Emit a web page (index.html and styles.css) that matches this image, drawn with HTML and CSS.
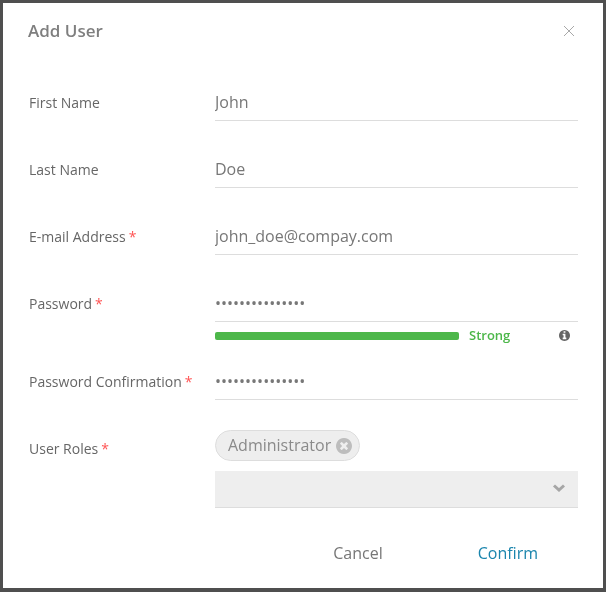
FILE: index.html
```html
<!DOCTYPE html>
<html lang="en">

<head>
    <meta charset="UTF-8">
    <title>Add User</title>
    <link rel="stylesheet" href="styles.css">
</head>

<body>
    <div class="modal">
        <div class="modal-head">
            <h2 class="modal-title">Add User</h2>
            <svg class="close-icon" viewBox="0 0 10 10" width="10" height="10">
                <path d="M0 0L10 10M10 0L0 10" stroke="#a8a8a8" stroke-width="1" fill="none"></path>
            </svg>
        </div>
        <form class="modal-body">
            <div class="row">
                <label class="row-label">First Name</label>
                <div class="row-field"><input class="text-input" type="text" value="John"></div>
            </div>
            <div class="row">
                <label class="row-label">Last Name</label>
                <div class="row-field"><input class="text-input" type="text" value="Doe"></div>
            </div>
            <div class="row">
                <label class="row-label">E-mail Address<span class="req">*</span></label>
                <div class="row-field"><input class="text-input" type="text" value="john_doe@compay.com"></div>
            </div>
            <div class="row row-password">
                <label class="row-label">Password<span class="req">*</span></label>
                <div class="row-field">
                    <input class="text-input" type="password" value="johndoepassword">
                    <div class="strength">
                        <div class="strength-bar"></div>
                        <span class="strength-text">Strong</span>
                        <svg class="info-icon" viewBox="0 0 1536 1536" width="11" height="11">
                            <path fill="#666" d="M1024 1248v-160q0-14-9-23t-23-9h-96V544q0-14-9-23t-23-9H544q-14 0-23 9t-9 23v160q0 14 9 23t23 9h96v320h-96q-14 0-23 9t-9 23v160q0 14 9 23t23 9h448q14 0 23-9t9-23zM896 352V192q0-14-9-23t-23-9H672q-14 0-23 9t-9 23v160q0 14 9 23t23 9h192q14 0 23-9t9-23zm640 416q0 209-103 385.500T1153.500 1433 768 1536t-385.500-103T103 1153.500 0 768t103-385.500T382.500 103 768 0t385.500 103T1433 382.500 1536 768z"></path>
                        </svg>
                    </div>
                </div>
            </div>
            <div class="row">
                <label class="row-label">Password Confirmation<span class="req">*</span></label>
                <div class="row-field"><input class="text-input" type="password" value="johndoepassword"></div>
            </div>
            <div class="row row-roles">
                <label class="row-label">User Roles<span class="req">*</span></label>
                <div class="row-field">
                    <span class="chip">
                        Administrator
                        <svg class="chip-remove" viewBox="0 0 1536 1536" width="16" height="16">
                            <path fill="#bdbdbd" d="M1149 994q0-26-19-45L949 768l181-181q19-19 19-45 0-27-19-46l-90-90q-19-19-46-19-26 0-45 19L768 587 587 406q-19-19-45-19-27 0-46 19l-90 90q-19 19-19 46 0 26 19 45l181 181-181 181q-19 19-19 45 0 27 19 46l90 90q19 19 46 19 26 0 45-19l181-181 181 181q19 19 45 19 27 0 46-19l90-90q19-19 19-46zm387-226q0 209-103 385.500T1153.500 1433 768 1536t-385.500-103T103 1153.500 0 768t103-385.500T382.500 103 768 0t385.500 103T1433 382.500 1536 768z"></path>
                        </svg>
                    </span>
                    <div class="select-box">
                        <svg class="select-arrow" viewBox="0 0 14 9" width="14" height="9">
                            <path d="M2 1.500L7 6L12 1.500" stroke="#a6a6a6" stroke-width="3" fill="none"></path>
                        </svg>
                    </div>
                </div>
            </div>
            <div class="modal-foot">
                <button class="btn" type="button">Cancel</button>
                <button class="btn btn-confirm" type="button">Confirm</button>
            </div>
        </form>
    </div>
</body>

</html>
```

FILE: styles.css
```css
* {
    box-sizing: border-box;
}

body {
    margin: 0;
    height: 592px;
    overflow: hidden;
    padding: 3px;
    background: #4f4f4f;
    font-family: "Open Sans", sans-serif;
    color: #666;
}

.modal {
    width: 600px;
    height: 585px;
    background: #fff;
}

.modal-head {
    display: flex;
    justify-content: space-between;
    align-items: center;
    height: 56px;
    padding: 0 29px 0 25px;
    will-change: opacity;
}

.modal-title {
    margin: 0;
    font-size: 17px;
    line-height: 24px;
    font-weight: 600;
    color: #7f7f7f;
}

.modal-body {
    padding: 26px 25px 0 26px;
    will-change: opacity;
}

.row {
    display: flex;
    margin-bottom: 31px;
}

.row-label {
    width: 186px;
    flex: none;
    font-size: 14px;
    line-height: 36px;
}

.row-field {
    flex: 1;
    min-width: 0;
}

.req {
    margin-left: 3px;
    color: #f55;
}

.text-input {
    display: block;
    width: 100%;
    height: 36px;
    padding: 0 0 2px;
    border: 0;
    border-bottom: 1px solid #ddd;
    outline: none;
    background: transparent;
    font-family: inherit;
    font-size: 16px;
    color: #777;
}

.row-password {
    margin-bottom: 0;
}

.strength {
    display: flex;
    align-items: center;
    height: 42px;
    padding-bottom: 14px;
}

.strength-bar {
    width: 244px;
    height: 8px;
    border-radius: 2px;
    background: #4db74a;
}

.strength-text {
    margin: -2px 0 0 10px;
    font-size: 13px;
    font-weight: 600;
    color: #4db74a;
}

.info-icon {
    margin: -1px 8px 0 auto;
}

.row-roles {
    margin-bottom: 0;
}

.chip {
    display: flex;
    align-items: center;
    width: fit-content;
    height: 31px;
    margin-top: -1px;
    padding: 0 7px 2px 12px;
    border: 1px solid #ddd;
    border-radius: 16px;
    background: #eee;
    font-size: 16px;
    color: #8a8a8a;
}

.chip-remove {
    margin: 2px 0 0 5px;
}

.select-box {
    display: flex;
    justify-content: flex-end;
    align-items: center;
    height: 37px;
    margin-top: 10px;
    padding: 0 12px 2px 0;
    border-bottom: 1px solid #ddd;
    background: #eee;
}

.modal-foot {
    display: flex;
    justify-content: flex-end;
    gap: 95px;
    margin-top: 34px;
    padding-right: 40px;
}

.btn {
    padding: 0;
    border: 0;
    background: none;
    font-family: inherit;
    font-size: 16px;
    color: #777;
}

.btn-confirm {
    color: #1a85ad;
}
```
